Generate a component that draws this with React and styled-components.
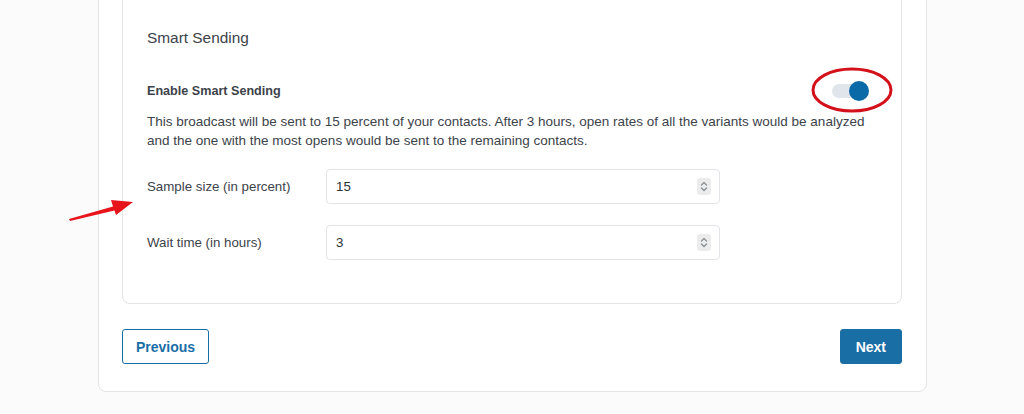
import React from "react";
import styled, { createGlobalStyle } from "styled-components";

const GlobalStyle = createGlobalStyle`
  html, body {
    margin: 0;
    padding: 0;
    background: #fbfbfb;
    font-family: "Liberation Sans", Arial, sans-serif;
    color: #3c434a;
  }
`;

const Page = styled.div`
  position: relative;
  width: 1024px;
  height: 414px;
  overflow: hidden;
`;

const OuterCard = styled.div`
  box-sizing: border-box;
  margin: -20px 0 0 98px;
  width: 829px;
  padding: 9px 24px 27px 23px;
  background: #fff;
  border: 1px solid #e4e4e4;
  border-radius: 8px;
`;

const InnerCard = styled.div`
  box-sizing: border-box;
  padding: 37px 24px 43px 24px;
  border: 1px solid #e4e4e4;
  border-radius: 8px;
  background: #fff;
`;

const Heading = styled.h3`
  margin: 0;
  font-size: 15.4px;
  line-height: 20px;
  font-weight: 500;
  color: #3c434a;
`;

const ToggleRow = styled.div`
  display: flex;
  align-items: center;
  justify-content: space-between;
  height: 24px;
  margin-top: 31px;
  padding-right: 9px;
`;

const ToggleLabel = styled.span`
  font-size: 12.6px;
  font-weight: 700;
  color: #3c434a;
`;

const Track = styled.span`
  display: inline-flex;
  align-items: center;
  justify-content: flex-end;
  width: 36px;
  height: 14px;
  border-radius: 7px;
  background: ${(p) => (p.$on ? "#dfe5ea" : "#ccc")};
`;

const Thumb = styled.span`
  width: 20px;
  height: 20px;
  border-radius: 50%;
  background: #0a6aa8;
  margin-right: -1px;
`;

const Description = styled.p`
  margin: 9px 0 0;
  font-size: 13.5px;
  line-height: 19px;
  color: #3c434a;
`;

const Fields = styled.div`
  display: flex;
  flex-direction: column;
  gap: 21px;
  margin-top: 19px;
`;

const FieldRow = styled.label`
  display: grid;
  grid-template-columns: 179px 394px;
  align-items: center;
`;

const FieldLabel = styled.span`
  font-size: 13.3px;
  color: #3c434a;
`;

const NumberBox = styled.div`
  box-sizing: border-box;
  display: flex;
  align-items: center;
  height: 35px;
  padding: 0 8px 0 9px;
  border: 1px solid #e2e4e7;
  border-radius: 4px;
  background: #fff;
`;

const NumberInput = styled.input`
  flex: 1;
  min-width: 0;
  border: 0;
  outline: 0;
  padding: 0;
  font: 13.3px "Liberation Sans", Arial, sans-serif;
  color: #2c3338;
  background: transparent;
`;

const Spinner = styled.span`
  display: flex;
  align-items: center;
  justify-content: center;
  width: 14px;
  height: 17px;
  border-radius: 3px;
  background: #ececec;
`;

const Footer = styled.div`
  display: flex;
  justify-content: space-between;
  margin-top: 25px;
`;

const Button = styled.button`
  box-sizing: border-box;
  height: 35px;
  padding: 0 ${(p) => (p.$primary ? "15px" : "13px")};
  border: 1px solid #1a6ea6;
  border-radius: 3px;
  background: ${(p) => (p.$primary ? "#1a6ea6" : "#fff")};
  color: ${(p) => (p.$primary ? "#fff" : "#1a6ea6")};
  font: 700 14px "Liberation Sans", Arial, sans-serif;
  cursor: pointer;
`;

const Annotation = styled.svg`
  position: absolute;
  left: 0;
  top: 0;
  pointer-events: none;
`;

const SpinIcon = () => (
  <svg width="10" height="13" viewBox="0 0 10 13">
    <path d="M2.5 5 L5 2.5 L7.5 5 M2.5 8 L5 10.5 L7.5 8" fill="none" stroke="#8a8f94" strokeWidth="1.3" strokeLinecap="round" strokeLinejoin="round" />
  </svg>
);

const fields = [
  { id: "sample", label: "Sample size (in percent)", value: 15 },
  { id: "wait", label: "Wait time (in hours)", value: 3 },
];

const App = () => {
  return (
    <>
      <GlobalStyle />
      <Page>
        <OuterCard>
          <InnerCard>
            <Heading>Smart Sending</Heading>
            <ToggleRow>
              <ToggleLabel>Enable Smart Sending</ToggleLabel>
              <Track $on>
                <Thumb />
              </Track>
            </ToggleRow>
            <Description>
              This broadcast will be sent to 15 percent of your contacts. After 3 hours, open rates of all the variants would be analyzed and the one with the most opens would be sent to the remaining contacts.
            </Description>
            <Fields>
              {fields.map((f) => (
                <FieldRow key={f.id} htmlFor={f.id}>
                  <FieldLabel>{f.label}</FieldLabel>
                  <NumberBox>
                    <NumberInput id={f.id} type="text" defaultValue={f.value} />
                    <Spinner>
                      <SpinIcon />
                    </Spinner>
                  </NumberBox>
                </FieldRow>
              ))}
            </Fields>
          </InnerCard>
          <Footer>
            <Button type="button">Previous</Button>
            <Button type="button" $primary>
              Next
            </Button>
          </Footer>
        </OuterCard>
        <Annotation width="1024" height="414" viewBox="0 0 1024 414">
          <ellipse cx="852" cy="90" rx="39" ry="21" fill="none" stroke="#d4111b" strokeWidth="3" />
          <path d="M69 219 L113 206.5 L111 200 L133 202 L116 215 L114.5 210.5 L70 221 Z" fill="#e8141c" />
        </Annotation>
      </Page>
    </>
  );
};

export default App;
